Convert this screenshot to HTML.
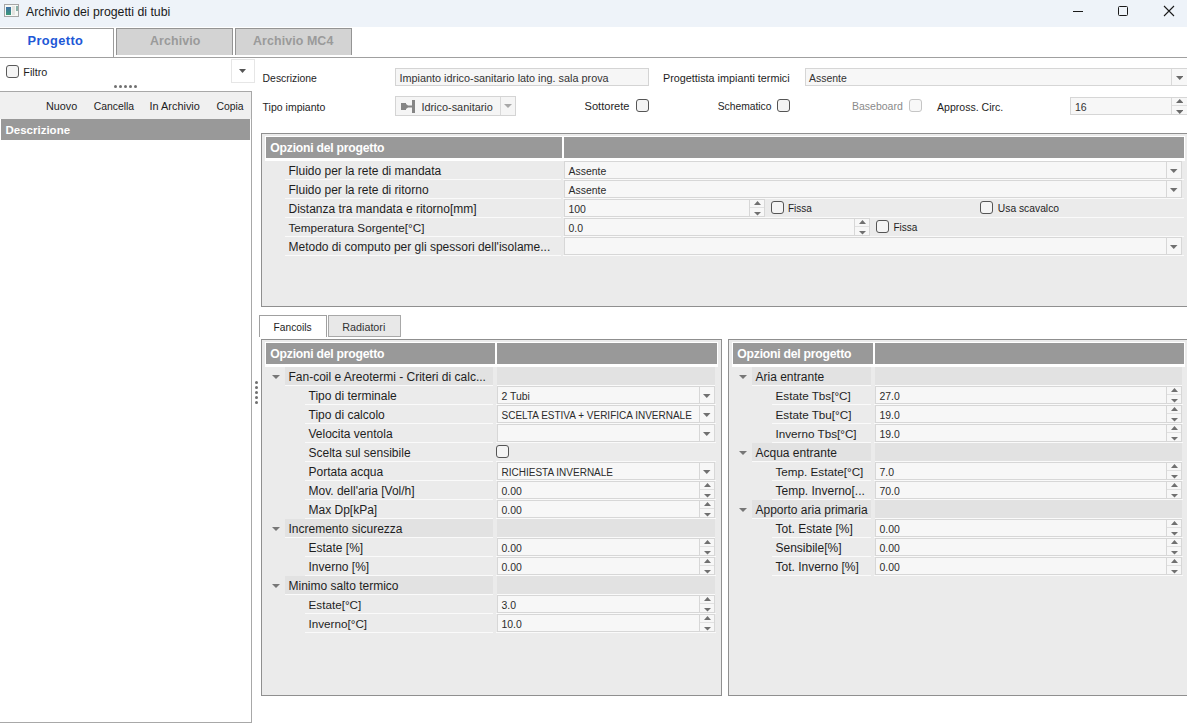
<!DOCTYPE html><html><head><meta charset="utf-8"><style>html,body{margin:0;padding:0}body{width:1187px;height:723px;overflow:hidden;position:relative;background:#fff;font-family:"Liberation Sans", sans-serif}.a{position:absolute;box-sizing:content-box}.t{white-space:nowrap;line-height:1}</style></head><body>
<div class="a" style="left:0px;top:0px;width:1187px;height:27px;background:#eef3f9"></div>
<div class="a" style="left:4px;top:4px;width:13px;height:11px;border:1px solid #a6a6a6;background:#f6f8f6"></div>
<div class="a" style="left:6px;top:7px;width:5px;height:8px;background:linear-gradient(180deg,#3f6fa6,#3d9a78)"></div>
<div class="a" style="left:12px;top:6px;width:3px;height:9px;background:#e4e4e0"></div>
<div class="a" style="left:16px;top:6px;width:2px;height:5px;background:#8ab0a8"></div>
<div class="a t" style="left:26px;top:6.00px;font-size:12.3px;color:#1a1a1a;font-weight:400;">Archivio dei progetti di tubi</div>
<div class="a" style="left:1073px;top:11px;width:10px;height:1px;background:#1a1a1a"></div>
<div class="a" style="left:1118px;top:6px;width:8px;height:8px;border:1px solid #1a1a1a;border-radius:1.5px"></div>
<svg class="a" style="left:1163px;top:5px" width="12" height="12"><path d="M1,1 L11,11 M11,1 L1,11" stroke="#1a1a1a" stroke-width="1.1"/></svg>
<div class="a" style="left:0px;top:57px;width:1187px;height:1px;background:#a0a0a0"></div>
<div class="a" style="left:0px;top:28px;width:113px;height:29px;background:#fff;border-top:1px solid #9c9c9c;border-right:1px solid #9c9c9c;box-sizing:border-box;width:114px;height:29px"></div>
<div class="a" style="left:116px;top:28px;width:117px;height:27px;background:#d3d3d3;border:1px solid #949494;border-bottom:none;box-sizing:border-box"></div>
<div class="a" style="left:235px;top:28px;width:117px;height:27px;background:#d3d3d3;border:1px solid #949494;border-bottom:none;box-sizing:border-box"></div>
<div class="a t" style="left:27.5px;top:35.00px;font-size:12.8px;color:#2157d6;font-weight:700;letter-spacing:0.4px;">Progetto</div>
<div class="a t" style="left:150px;top:35.00px;font-size:12.4px;color:#9a9a9a;font-weight:700;letter-spacing:0.1px;">Archivio</div>
<div class="a t" style="left:253px;top:35.00px;font-size:12.4px;color:#9a9a9a;font-weight:700;letter-spacing:0.1px;">Archivio MC4</div>
<div class="a" style="left:6px;top:65px;width:11px;height:11px;border:1px solid #5a5a5a;border-radius:3px;background:#f5f5f5"></div>
<div class="a t" style="left:23.3px;top:67.00px;font-size:10.8px;color:#1e1e1e;font-weight:400;">Filtro</div>
<div class="a" style="left:231px;top:59px;width:24px;height:24px;border:1px solid #e6e6e6;box-sizing:border-box;background:#fff"></div>
<svg class="a" style="left:239.00px;top:69px" width="7" height="4"><polygon points="0,0 7,0 3.5,4" fill="#555"/></svg>
<div class="a" style="left:114.3px;top:85px;width:3px;height:3px;background:#707070;border-radius:1.5px"></div>
<div class="a" style="left:119.1px;top:85px;width:3px;height:3px;background:#707070;border-radius:1.5px"></div>
<div class="a" style="left:123.89999999999999px;top:85px;width:3px;height:3px;background:#707070;border-radius:1.5px"></div>
<div class="a" style="left:128.7px;top:85px;width:3px;height:3px;background:#707070;border-radius:1.5px"></div>
<div class="a" style="left:133.5px;top:85px;width:3px;height:3px;background:#707070;border-radius:1.5px"></div>
<div class="a" style="left:0px;top:91px;width:252px;height:632px;border-top:1px solid #a8a8a8;border-right:1px solid #a8a8a8;border-bottom:1px solid #a8a8a8;box-sizing:border-box;background:#fff"></div>
<div class="a" style="left:0px;top:92px;width:251px;height:27px;background:#f0f0f0"></div>
<div class="a t" style="left:46px;top:101.00px;font-size:10.8px;color:#1e1e1e;font-weight:400;">Nuovo</div>
<div class="a t" style="left:93.7px;top:102.00px;font-size:10.4px;color:#1e1e1e;font-weight:400;">Cancella</div>
<div class="a t" style="left:149.6px;top:101.00px;font-size:10.9px;color:#1e1e1e;font-weight:400;">In Archivio</div>
<div class="a t" style="left:216.4px;top:102.00px;font-size:10.4px;color:#1e1e1e;font-weight:400;">Copia</div>
<div class="a" style="left:1px;top:119px;width:249px;height:21px;background:#999999"></div>
<div class="a t" style="left:5.5px;top:125.00px;font-size:11.5px;color:#fff;font-weight:700;">Descrizione</div>
<div class="a t" style="left:262.6px;top:74.00px;font-size:10.4px;color:#1e1e1e;font-weight:400;">Descrizione</div>
<div class="a" style="left:395px;top:68px;width:254px;height:18px;background:#f6f6f6;border:1px solid #d4d4d4;box-sizing:border-box"></div>
<div class="a t" style="left:399.5px;top:73.00px;font-size:10.85px;color:#333;font-weight:400;">Impianto idrico-sanitario lato ing. sala prova</div>
<div class="a t" style="left:663px;top:73.00px;font-size:10.8px;color:#1e1e1e;font-weight:400;">Progettista impianti termici</div>
<div class="a" style="left:805px;top:68px;width:400px;height:18px;background:#f7f7f7;border:1px solid #d6d6d6;box-sizing:border-box"></div>
<div class="a" style="left:1171px;top:69px;width:1px;height:16px;background:#d9d9d9"></div>
<div class="a t" style="left:809px;top:74.00px;font-size:10.45px;color:#333;font-weight:400;">Assente</div>
<svg class="a" style="left:1175.65px;top:76px" width="7.5" height="4"><polygon points="0,0 7.5,0 3.75,4" fill="#6a6a6a"/></svg>
<div class="a t" style="left:262.6px;top:102.00px;font-size:10.5px;color:#1e1e1e;font-weight:400;">Tipo impianto</div>
<div class="a" style="left:395px;top:96px;width:121px;height:20px;background:#f5f5f5;border:1px solid #d4d4d4;box-sizing:border-box"></div>
<div class="a" style="left:500px;top:97px;width:1px;height:18px;background:#d9d9d9"></div>
<svg class="a" style="left:504.00px;top:104px" width="8" height="4"><polygon points="0,0 8,0 4.0,4" fill="#a8a8a8"/></svg>
<svg class="a" style="left:400px;top:99px" width="16" height="15"><g fill="#858585"><rect x="1" y="4" width="5" height="7"/><polygon points="6,5 8,6.5 8,8.5 6,10"/><rect x="8" y="6.5" width="4" height="2"/><rect x="12" y="1" width="3" height="13"/></g></svg>
<div class="a t" style="left:421.4px;top:102.00px;font-size:10.9px;color:#333;font-weight:400;">Idrico-sanitario</div>
<div class="a t" style="left:584.5px;top:101.00px;font-size:11.1px;color:#1e1e1e;font-weight:400;">Sottorete</div>
<div class="a" style="left:636px;top:99px;width:11px;height:11px;border:1px solid #555;border-radius:3px;background:#f4f4f4"></div>
<div class="a t" style="left:717.7px;top:102.00px;font-size:10.3px;color:#1e1e1e;font-weight:400;">Schematico</div>
<div class="a" style="left:777px;top:99px;width:11px;height:11px;border:1px solid #555;border-radius:3px;background:#f4f4f4"></div>
<div class="a t" style="left:852px;top:101.00px;font-size:10.5px;color:#8a8a8a;font-weight:400;">Baseboard</div>
<div class="a" style="left:909px;top:99px;width:11px;height:11px;border:1px solid #c5c5c5;border-radius:3px;background:#f8f8f8"></div>
<div class="a t" style="left:937px;top:102.00px;font-size:10.55px;color:#1e1e1e;font-weight:400;">Appross. Circ.</div>
<div class="a" style="left:1070px;top:97px;width:140px;height:18px;background:#f7f7f7;border:1px solid #d6d6d6;box-sizing:border-box"></div>
<div class="a" style="left:1171px;top:98px;width:1px;height:16px;background:#d9d9d9"></div>
<div class="a" style="left:1172px;top:105px;width:15px;height:1px;background:#dedede"></div>
<svg class="a" style="left:1175.65px;top:99px" width="7.5" height="4"><polygon points="0,4 7.5,4 3.75,0" fill="#6a6a6a"/></svg>
<svg class="a" style="left:1175.65px;top:110px" width="7.5" height="4"><polygon points="0,0 7.5,0 3.75,4" fill="#6a6a6a"/></svg>
<div class="a t" style="left:1075px;top:102.00px;font-size:10.5px;color:#333;font-weight:400;">16</div>
<div class="a" style="left:261px;top:133px;width:939px;height:174px;border:1px solid #8f8f8f;box-sizing:border-box;background:#ebebeb"></div>
<div class="a" style="left:265px;top:136px;width:920px;height:25px;background:#fff"></div>
<div class="a" style="left:266px;top:137px;width:296px;height:21px;background:#999999"></div>
<div class="a" style="left:564px;top:137px;width:620px;height:21px;background:#999999"></div>
<div class="a t" style="left:270.3px;top:142.00px;font-size:12.2px;color:#fff;font-weight:700;letter-spacing:-0.23px;">Opzioni del progetto</div>
<div class="a" style="left:285px;top:179px;width:276px;height:1px;background:#fafafa"></div>
<div class="a t" style="left:288.5px;top:165.00px;font-size:12px;color:#1e1e1e;font-weight:400;">Fluido per la rete di mandata</div>
<div class="a" style="left:285px;top:198px;width:276px;height:1px;background:#fafafa"></div>
<div class="a t" style="left:288.5px;top:184.00px;font-size:12px;color:#1e1e1e;font-weight:400;">Fluido per la rete di ritorno</div>
<div class="a" style="left:285px;top:217px;width:276px;height:1px;background:#fafafa"></div>
<div class="a t" style="left:288.5px;top:203.00px;font-size:12px;color:#1e1e1e;font-weight:400;">Distanza tra mandata e ritorno[mm]</div>
<div class="a" style="left:285px;top:236px;width:276px;height:1px;background:#fafafa"></div>
<div class="a t" style="left:288.5px;top:222.00px;font-size:11.7px;color:#1e1e1e;font-weight:400;">Temperatura Sorgente[°C]</div>
<div class="a" style="left:285px;top:255px;width:276px;height:1px;background:#fafafa"></div>
<div class="a t" style="left:288.5px;top:241.00px;font-size:12px;color:#1e1e1e;font-weight:400;">Metodo di computo per gli spessori dell'isolame...</div>
<div class="a" style="left:563px;top:179px;width:621px;height:1px;background:#fafafa"></div>
<div class="a" style="left:563px;top:198px;width:621px;height:1px;background:#fafafa"></div>
<div class="a" style="left:563px;top:217px;width:621px;height:1px;background:#fafafa"></div>
<div class="a" style="left:563px;top:236px;width:621px;height:1px;background:#fafafa"></div>
<div class="a" style="left:563px;top:255px;width:621px;height:1px;background:#fafafa"></div>
<div class="a" style="left:564px;top:161px;width:618px;height:18px;background:#f7f7f7;border:1px solid #d7d7d7;box-sizing:border-box"></div>
<div class="a" style="left:1166px;top:162px;width:1px;height:16px;background:#d7d7d7"></div>
<svg class="a" style="left:1170.25px;top:169px" width="7.5" height="4"><polygon points="0,0 7.5,0 3.75,4" fill="#707070"/></svg>
<div class="a t" style="left:568.5px;top:167.00px;font-size:10.45px;color:#2b2b2b;font-weight:400;">Assente</div>
<div class="a" style="left:564px;top:180px;width:618px;height:18px;background:#f7f7f7;border:1px solid #d7d7d7;box-sizing:border-box"></div>
<div class="a" style="left:1166px;top:181px;width:1px;height:16px;background:#d7d7d7"></div>
<svg class="a" style="left:1170.25px;top:188px" width="7.5" height="4"><polygon points="0,0 7.5,0 3.75,4" fill="#707070"/></svg>
<div class="a t" style="left:568.5px;top:186.00px;font-size:10.45px;color:#2b2b2b;font-weight:400;">Assente</div>
<div class="a" style="left:564px;top:199px;width:201px;height:18px;background:#f7f7f7;border:1px solid #d7d7d7;box-sizing:border-box"></div>
<div class="a" style="left:749px;top:200px;width:1px;height:16px;background:#d7d7d7"></div>
<div class="a" style="left:750px;top:207px;width:14px;height:1px;background:#e0e0e0"></div>
<svg class="a" style="left:753.50px;top:201px" width="7" height="4"><polygon points="0,4 7,4 3.5,0" fill="#707070"/></svg>
<svg class="a" style="left:753.50px;top:212px" width="7" height="3.6"><polygon points="0,0 7,0 3.5,3.6" fill="#707070"/></svg>
<div class="a t" style="left:568.5px;top:205.00px;font-size:10.45px;color:#2b2b2b;font-weight:400;">100</div>
<div class="a" style="left:771px;top:201px;width:11px;height:11px;border:1px solid #555;border-radius:3px;background:#f4f4f4"></div>
<div class="a t" style="left:788px;top:204.00px;font-size:10.0px;color:#1e1e1e;font-weight:400;">Fissa</div>
<div class="a" style="left:980px;top:201px;width:11px;height:11px;border:1px solid #555;border-radius:3px;background:#f4f4f4"></div>
<div class="a t" style="left:997.8px;top:204.00px;font-size:10.3px;color:#1e1e1e;font-weight:400;">Usa scavalco</div>
<div class="a" style="left:564px;top:218px;width:306px;height:18px;background:#f7f7f7;border:1px solid #d7d7d7;box-sizing:border-box"></div>
<div class="a" style="left:854px;top:219px;width:1px;height:16px;background:#d7d7d7"></div>
<div class="a" style="left:855px;top:226px;width:14px;height:1px;background:#e0e0e0"></div>
<svg class="a" style="left:858.50px;top:220px" width="7" height="4"><polygon points="0,4 7,4 3.5,0" fill="#707070"/></svg>
<svg class="a" style="left:858.50px;top:231px" width="7" height="3.6"><polygon points="0,0 7,0 3.5,3.6" fill="#707070"/></svg>
<div class="a t" style="left:568.5px;top:224.00px;font-size:10.45px;color:#2b2b2b;font-weight:400;">0.0</div>
<div class="a" style="left:876px;top:220px;width:11px;height:11px;border:1px solid #555;border-radius:3px;background:#f4f4f4"></div>
<div class="a t" style="left:893.5px;top:223.00px;font-size:10.0px;color:#1e1e1e;font-weight:400;">Fissa</div>
<div class="a" style="left:564px;top:237px;width:618px;height:18px;background:#f7f7f7;border:1px solid #d7d7d7;box-sizing:border-box"></div>
<div class="a" style="left:1166px;top:238px;width:1px;height:16px;background:#d7d7d7"></div>
<svg class="a" style="left:1170.25px;top:245px" width="7.5" height="4"><polygon points="0,0 7.5,0 3.75,4" fill="#707070"/></svg>
<div class="a" style="left:259px;top:315px;width:68px;height:22px;background:#fff;border:1px solid #a0a0a0;border-bottom:none;box-sizing:border-box"></div>
<div class="a" style="left:328px;top:315px;width:73px;height:22px;background:#e8e8e8;border:1px solid #a8a8a8;box-sizing:border-box"></div>
<div class="a t" style="left:273.6px;top:323.00px;font-size:10.2px;color:#1e1e1e;font-weight:400;">Fancoils</div>
<div class="a t" style="left:342.3px;top:322.00px;font-size:10.75px;color:#333;font-weight:400;">Radiatori</div>
<div class="a" style="left:261px;top:339px;width:461px;height:357px;border:1px solid #8f8f8f;box-sizing:border-box;background:#ebebeb"></div>
<div class="a" style="left:265px;top:342px;width:453px;height:25px;background:#fff"></div>
<div class="a" style="left:266px;top:343px;width:229px;height:21px;background:#999999"></div>
<div class="a" style="left:497px;top:343px;width:220px;height:21px;background:#999999"></div>
<div class="a t" style="left:270.3px;top:348.00px;font-size:12.2px;color:#fff;font-weight:700;letter-spacing:-0.23px;">Opzioni del progetto</div>
<div class="a" style="left:285px;top:367px;width:208px;height:18px;background:#e2e2e2"></div>
<div class="a" style="left:285px;top:385px;width:208px;height:1px;background:#fafafa"></div>
<div class="a t" style="left:288.5px;top:371.00px;font-size:12px;color:#1e1e1e;font-weight:400;">Fan-coil e Areotermi - Criteri di calc...</div>
<div class="a" style="left:497px;top:367px;width:218px;height:18px;background:#e2e2e2"></div>
<div class="a" style="left:497px;top:385px;width:218px;height:1px;background:#fafafa"></div>
<svg class="a" style="left:271.50px;top:375px" width="8" height="4"><polygon points="0,0 8,0 4.0,4" fill="#777"/></svg>
<div class="a" style="left:305px;top:404px;width:188px;height:1px;background:#fafafa"></div>
<div class="a t" style="left:308.5px;top:390.00px;font-size:12px;color:#1e1e1e;font-weight:400;">Tipo di terminale</div>
<div class="a" style="left:496px;top:404px;width:220px;height:1px;background:#fafafa"></div>
<div class="a" style="left:497px;top:386px;width:218px;height:18px;background:#f7f7f7;border:1px solid #d7d7d7;box-sizing:border-box"></div>
<div class="a" style="left:699px;top:387px;width:1px;height:16px;background:#d7d7d7"></div>
<svg class="a" style="left:703.25px;top:394px" width="7.5" height="4"><polygon points="0,0 7.5,0 3.75,4" fill="#707070"/></svg>
<div class="a t" style="left:501.5px;top:392.00px;font-size:10.45px;color:#2b2b2b;font-weight:400;">2 Tubi</div>
<div class="a" style="left:305px;top:423px;width:188px;height:1px;background:#fafafa"></div>
<div class="a t" style="left:308.5px;top:409.00px;font-size:12px;color:#1e1e1e;font-weight:400;">Tipo di calcolo</div>
<div class="a" style="left:496px;top:423px;width:220px;height:1px;background:#fafafa"></div>
<div class="a" style="left:497px;top:405px;width:218px;height:18px;background:#f7f7f7;border:1px solid #d7d7d7;box-sizing:border-box"></div>
<div class="a" style="left:699px;top:406px;width:1px;height:16px;background:#d7d7d7"></div>
<svg class="a" style="left:703.25px;top:413px" width="7.5" height="4"><polygon points="0,0 7.5,0 3.75,4" fill="#707070"/></svg>
<div class="a t" style="left:501.5px;top:411.00px;font-size:10.0px;color:#2b2b2b;font-weight:400;">SCELTA ESTIVA + VERIFICA INVERNALE</div>
<div class="a" style="left:305px;top:442px;width:188px;height:1px;background:#fafafa"></div>
<div class="a t" style="left:308.5px;top:428.00px;font-size:12px;color:#1e1e1e;font-weight:400;">Velocita ventola</div>
<div class="a" style="left:496px;top:442px;width:220px;height:1px;background:#fafafa"></div>
<div class="a" style="left:497px;top:424px;width:218px;height:18px;background:#f7f7f7;border:1px solid #d7d7d7;box-sizing:border-box"></div>
<div class="a" style="left:699px;top:425px;width:1px;height:16px;background:#d7d7d7"></div>
<svg class="a" style="left:703.25px;top:432px" width="7.5" height="4"><polygon points="0,0 7.5,0 3.75,4" fill="#707070"/></svg>
<div class="a" style="left:305px;top:461px;width:188px;height:1px;background:#fafafa"></div>
<div class="a t" style="left:308.5px;top:447.00px;font-size:12px;color:#1e1e1e;font-weight:400;">Scelta sul sensibile</div>
<div class="a" style="left:496px;top:461px;width:220px;height:1px;background:#fafafa"></div>
<div class="a" style="left:496px;top:445px;width:11px;height:11px;border:1px solid #555;border-radius:3px;background:#f4f4f4"></div>
<div class="a" style="left:305px;top:480px;width:188px;height:1px;background:#fafafa"></div>
<div class="a t" style="left:308.5px;top:466.00px;font-size:12px;color:#1e1e1e;font-weight:400;">Portata acqua</div>
<div class="a" style="left:496px;top:480px;width:220px;height:1px;background:#fafafa"></div>
<div class="a" style="left:497px;top:462px;width:218px;height:18px;background:#f7f7f7;border:1px solid #d7d7d7;box-sizing:border-box"></div>
<div class="a" style="left:699px;top:463px;width:1px;height:16px;background:#d7d7d7"></div>
<svg class="a" style="left:703.25px;top:470px" width="7.5" height="4"><polygon points="0,0 7.5,0 3.75,4" fill="#707070"/></svg>
<div class="a t" style="left:501.5px;top:468.00px;font-size:10.0px;color:#2b2b2b;font-weight:400;">RICHIESTA INVERNALE</div>
<div class="a" style="left:305px;top:499px;width:188px;height:1px;background:#fafafa"></div>
<div class="a t" style="left:308.5px;top:485.00px;font-size:12px;color:#1e1e1e;font-weight:400;">Mov. dell'aria [Vol/h]</div>
<div class="a" style="left:496px;top:499px;width:220px;height:1px;background:#fafafa"></div>
<div class="a" style="left:497px;top:481px;width:218px;height:18px;background:#f7f7f7;border:1px solid #d7d7d7;box-sizing:border-box"></div>
<div class="a" style="left:699px;top:482px;width:1px;height:16px;background:#d7d7d7"></div>
<div class="a" style="left:700px;top:489px;width:14px;height:1px;background:#e0e0e0"></div>
<svg class="a" style="left:703.50px;top:483px" width="7" height="4"><polygon points="0,4 7,4 3.5,0" fill="#707070"/></svg>
<svg class="a" style="left:703.50px;top:494px" width="7" height="3.6"><polygon points="0,0 7,0 3.5,3.6" fill="#707070"/></svg>
<div class="a t" style="left:501.5px;top:487.00px;font-size:10.45px;color:#2b2b2b;font-weight:400;">0.00</div>
<div class="a" style="left:305px;top:518px;width:188px;height:1px;background:#fafafa"></div>
<div class="a t" style="left:308.5px;top:504.00px;font-size:12px;color:#1e1e1e;font-weight:400;">Max Dp[kPa]</div>
<div class="a" style="left:496px;top:518px;width:220px;height:1px;background:#fafafa"></div>
<div class="a" style="left:497px;top:500px;width:218px;height:18px;background:#f7f7f7;border:1px solid #d7d7d7;box-sizing:border-box"></div>
<div class="a" style="left:699px;top:501px;width:1px;height:16px;background:#d7d7d7"></div>
<div class="a" style="left:700px;top:508px;width:14px;height:1px;background:#e0e0e0"></div>
<svg class="a" style="left:703.50px;top:502px" width="7" height="4"><polygon points="0,4 7,4 3.5,0" fill="#707070"/></svg>
<svg class="a" style="left:703.50px;top:513px" width="7" height="3.6"><polygon points="0,0 7,0 3.5,3.6" fill="#707070"/></svg>
<div class="a t" style="left:501.5px;top:506.00px;font-size:10.45px;color:#2b2b2b;font-weight:400;">0.00</div>
<div class="a" style="left:285px;top:519px;width:208px;height:18px;background:#e2e2e2"></div>
<div class="a" style="left:285px;top:537px;width:208px;height:1px;background:#fafafa"></div>
<div class="a t" style="left:288.5px;top:523.00px;font-size:12px;color:#1e1e1e;font-weight:400;">Incremento sicurezza</div>
<div class="a" style="left:497px;top:519px;width:218px;height:18px;background:#e2e2e2"></div>
<div class="a" style="left:497px;top:537px;width:218px;height:1px;background:#fafafa"></div>
<svg class="a" style="left:271.50px;top:527px" width="8" height="4"><polygon points="0,0 8,0 4.0,4" fill="#777"/></svg>
<div class="a" style="left:305px;top:556px;width:188px;height:1px;background:#fafafa"></div>
<div class="a t" style="left:308.5px;top:542.00px;font-size:12px;color:#1e1e1e;font-weight:400;">Estate [%]</div>
<div class="a" style="left:496px;top:556px;width:220px;height:1px;background:#fafafa"></div>
<div class="a" style="left:497px;top:538px;width:218px;height:18px;background:#f7f7f7;border:1px solid #d7d7d7;box-sizing:border-box"></div>
<div class="a" style="left:699px;top:539px;width:1px;height:16px;background:#d7d7d7"></div>
<div class="a" style="left:700px;top:546px;width:14px;height:1px;background:#e0e0e0"></div>
<svg class="a" style="left:703.50px;top:540px" width="7" height="4"><polygon points="0,4 7,4 3.5,0" fill="#707070"/></svg>
<svg class="a" style="left:703.50px;top:551px" width="7" height="3.6"><polygon points="0,0 7,0 3.5,3.6" fill="#707070"/></svg>
<div class="a t" style="left:501.5px;top:544.00px;font-size:10.45px;color:#2b2b2b;font-weight:400;">0.00</div>
<div class="a" style="left:305px;top:575px;width:188px;height:1px;background:#fafafa"></div>
<div class="a t" style="left:308.5px;top:561.00px;font-size:12px;color:#1e1e1e;font-weight:400;">Inverno [%]</div>
<div class="a" style="left:496px;top:575px;width:220px;height:1px;background:#fafafa"></div>
<div class="a" style="left:497px;top:557px;width:218px;height:18px;background:#f7f7f7;border:1px solid #d7d7d7;box-sizing:border-box"></div>
<div class="a" style="left:699px;top:558px;width:1px;height:16px;background:#d7d7d7"></div>
<div class="a" style="left:700px;top:565px;width:14px;height:1px;background:#e0e0e0"></div>
<svg class="a" style="left:703.50px;top:559px" width="7" height="4"><polygon points="0,4 7,4 3.5,0" fill="#707070"/></svg>
<svg class="a" style="left:703.50px;top:570px" width="7" height="3.6"><polygon points="0,0 7,0 3.5,3.6" fill="#707070"/></svg>
<div class="a t" style="left:501.5px;top:563.00px;font-size:10.45px;color:#2b2b2b;font-weight:400;">0.00</div>
<div class="a" style="left:285px;top:576px;width:208px;height:18px;background:#e2e2e2"></div>
<div class="a" style="left:285px;top:594px;width:208px;height:1px;background:#fafafa"></div>
<div class="a t" style="left:288.5px;top:580.00px;font-size:12px;color:#1e1e1e;font-weight:400;">Minimo salto termico</div>
<div class="a" style="left:497px;top:576px;width:218px;height:18px;background:#e2e2e2"></div>
<div class="a" style="left:497px;top:594px;width:218px;height:1px;background:#fafafa"></div>
<svg class="a" style="left:271.50px;top:584px" width="8" height="4"><polygon points="0,0 8,0 4.0,4" fill="#777"/></svg>
<div class="a" style="left:305px;top:613px;width:188px;height:1px;background:#fafafa"></div>
<div class="a t" style="left:308.5px;top:599.00px;font-size:11.7px;color:#1e1e1e;font-weight:400;">Estate[°C]</div>
<div class="a" style="left:496px;top:613px;width:220px;height:1px;background:#fafafa"></div>
<div class="a" style="left:497px;top:595px;width:218px;height:18px;background:#f7f7f7;border:1px solid #d7d7d7;box-sizing:border-box"></div>
<div class="a" style="left:699px;top:596px;width:1px;height:16px;background:#d7d7d7"></div>
<div class="a" style="left:700px;top:603px;width:14px;height:1px;background:#e0e0e0"></div>
<svg class="a" style="left:703.50px;top:597px" width="7" height="4"><polygon points="0,4 7,4 3.5,0" fill="#707070"/></svg>
<svg class="a" style="left:703.50px;top:608px" width="7" height="3.6"><polygon points="0,0 7,0 3.5,3.6" fill="#707070"/></svg>
<div class="a t" style="left:501.5px;top:601.00px;font-size:10.45px;color:#2b2b2b;font-weight:400;">3.0</div>
<div class="a" style="left:305px;top:632px;width:188px;height:1px;background:#fafafa"></div>
<div class="a t" style="left:308.5px;top:618.00px;font-size:11.7px;color:#1e1e1e;font-weight:400;">Inverno[°C]</div>
<div class="a" style="left:496px;top:632px;width:220px;height:1px;background:#fafafa"></div>
<div class="a" style="left:497px;top:614px;width:218px;height:18px;background:#f7f7f7;border:1px solid #d7d7d7;box-sizing:border-box"></div>
<div class="a" style="left:699px;top:615px;width:1px;height:16px;background:#d7d7d7"></div>
<div class="a" style="left:700px;top:622px;width:14px;height:1px;background:#e0e0e0"></div>
<svg class="a" style="left:703.50px;top:616px" width="7" height="4"><polygon points="0,4 7,4 3.5,0" fill="#707070"/></svg>
<svg class="a" style="left:703.50px;top:627px" width="7" height="3.6"><polygon points="0,0 7,0 3.5,3.6" fill="#707070"/></svg>
<div class="a t" style="left:501.5px;top:620.00px;font-size:10.45px;color:#2b2b2b;font-weight:400;">10.0</div>
<div class="a" style="left:728px;top:339px;width:472px;height:357px;border:1px solid #8f8f8f;box-sizing:border-box;background:#ebebeb"></div>
<div class="a" style="left:732px;top:342px;width:453px;height:25px;background:#fff"></div>
<div class="a" style="left:733px;top:343px;width:140px;height:21px;background:#999999"></div>
<div class="a" style="left:875px;top:343px;width:309px;height:21px;background:#999999"></div>
<div class="a t" style="left:737.3px;top:348.00px;font-size:12.2px;color:#fff;font-weight:700;letter-spacing:-0.23px;">Opzioni del progetto</div>
<div class="a" style="left:752px;top:367px;width:119px;height:18px;background:#e2e2e2"></div>
<div class="a" style="left:752px;top:385px;width:119px;height:1px;background:#fafafa"></div>
<div class="a t" style="left:755.5px;top:371.00px;font-size:12px;color:#1e1e1e;font-weight:400;">Aria entrante</div>
<div class="a" style="left:875px;top:367px;width:307px;height:18px;background:#e2e2e2"></div>
<div class="a" style="left:875px;top:385px;width:307px;height:1px;background:#fafafa"></div>
<svg class="a" style="left:738.50px;top:375px" width="8" height="4"><polygon points="0,0 8,0 4.0,4" fill="#777"/></svg>
<div class="a" style="left:772px;top:404px;width:99px;height:1px;background:#fafafa"></div>
<div class="a t" style="left:775.5px;top:390.00px;font-size:11.7px;color:#1e1e1e;font-weight:400;">Estate Tbs[°C]</div>
<div class="a" style="left:874px;top:404px;width:309px;height:1px;background:#fafafa"></div>
<div class="a" style="left:875px;top:386px;width:307px;height:18px;background:#f7f7f7;border:1px solid #d7d7d7;box-sizing:border-box"></div>
<div class="a" style="left:1166px;top:387px;width:1px;height:16px;background:#d7d7d7"></div>
<div class="a" style="left:1167px;top:394px;width:14px;height:1px;background:#e0e0e0"></div>
<svg class="a" style="left:1170.50px;top:388px" width="7" height="4"><polygon points="0,4 7,4 3.5,0" fill="#707070"/></svg>
<svg class="a" style="left:1170.50px;top:399px" width="7" height="3.6"><polygon points="0,0 7,0 3.5,3.6" fill="#707070"/></svg>
<div class="a t" style="left:879.5px;top:392.00px;font-size:10.45px;color:#2b2b2b;font-weight:400;">27.0</div>
<div class="a" style="left:772px;top:423px;width:99px;height:1px;background:#fafafa"></div>
<div class="a t" style="left:775.5px;top:409.00px;font-size:11.7px;color:#1e1e1e;font-weight:400;">Estate Tbu[°C]</div>
<div class="a" style="left:874px;top:423px;width:309px;height:1px;background:#fafafa"></div>
<div class="a" style="left:875px;top:405px;width:307px;height:18px;background:#f7f7f7;border:1px solid #d7d7d7;box-sizing:border-box"></div>
<div class="a" style="left:1166px;top:406px;width:1px;height:16px;background:#d7d7d7"></div>
<div class="a" style="left:1167px;top:413px;width:14px;height:1px;background:#e0e0e0"></div>
<svg class="a" style="left:1170.50px;top:407px" width="7" height="4"><polygon points="0,4 7,4 3.5,0" fill="#707070"/></svg>
<svg class="a" style="left:1170.50px;top:418px" width="7" height="3.6"><polygon points="0,0 7,0 3.5,3.6" fill="#707070"/></svg>
<div class="a t" style="left:879.5px;top:411.00px;font-size:10.45px;color:#2b2b2b;font-weight:400;">19.0</div>
<div class="a" style="left:772px;top:442px;width:99px;height:1px;background:#fafafa"></div>
<div class="a t" style="left:775.5px;top:428.00px;font-size:11.7px;color:#1e1e1e;font-weight:400;">Inverno Tbs[°C]</div>
<div class="a" style="left:874px;top:442px;width:309px;height:1px;background:#fafafa"></div>
<div class="a" style="left:875px;top:424px;width:307px;height:18px;background:#f7f7f7;border:1px solid #d7d7d7;box-sizing:border-box"></div>
<div class="a" style="left:1166px;top:425px;width:1px;height:16px;background:#d7d7d7"></div>
<div class="a" style="left:1167px;top:432px;width:14px;height:1px;background:#e0e0e0"></div>
<svg class="a" style="left:1170.50px;top:426px" width="7" height="4"><polygon points="0,4 7,4 3.5,0" fill="#707070"/></svg>
<svg class="a" style="left:1170.50px;top:437px" width="7" height="3.6"><polygon points="0,0 7,0 3.5,3.6" fill="#707070"/></svg>
<div class="a t" style="left:879.5px;top:430.00px;font-size:10.45px;color:#2b2b2b;font-weight:400;">19.0</div>
<div class="a" style="left:752px;top:443px;width:119px;height:18px;background:#e2e2e2"></div>
<div class="a" style="left:752px;top:461px;width:119px;height:1px;background:#fafafa"></div>
<div class="a t" style="left:755.5px;top:447.00px;font-size:12px;color:#1e1e1e;font-weight:400;">Acqua entrante</div>
<div class="a" style="left:875px;top:443px;width:307px;height:18px;background:#e2e2e2"></div>
<div class="a" style="left:875px;top:461px;width:307px;height:1px;background:#fafafa"></div>
<svg class="a" style="left:738.50px;top:451px" width="8" height="4"><polygon points="0,0 8,0 4.0,4" fill="#777"/></svg>
<div class="a" style="left:772px;top:480px;width:99px;height:1px;background:#fafafa"></div>
<div class="a t" style="left:775.5px;top:466.00px;font-size:11.7px;color:#1e1e1e;font-weight:400;">Temp. Estate[°C]</div>
<div class="a" style="left:874px;top:480px;width:309px;height:1px;background:#fafafa"></div>
<div class="a" style="left:875px;top:462px;width:307px;height:18px;background:#f7f7f7;border:1px solid #d7d7d7;box-sizing:border-box"></div>
<div class="a" style="left:1166px;top:463px;width:1px;height:16px;background:#d7d7d7"></div>
<div class="a" style="left:1167px;top:470px;width:14px;height:1px;background:#e0e0e0"></div>
<svg class="a" style="left:1170.50px;top:464px" width="7" height="4"><polygon points="0,4 7,4 3.5,0" fill="#707070"/></svg>
<svg class="a" style="left:1170.50px;top:475px" width="7" height="3.6"><polygon points="0,0 7,0 3.5,3.6" fill="#707070"/></svg>
<div class="a t" style="left:879.5px;top:468.00px;font-size:10.45px;color:#2b2b2b;font-weight:400;">7.0</div>
<div class="a" style="left:772px;top:499px;width:99px;height:1px;background:#fafafa"></div>
<div class="a t" style="left:775.5px;top:485.00px;font-size:12px;color:#1e1e1e;font-weight:400;">Temp. Inverno[...</div>
<div class="a" style="left:874px;top:499px;width:309px;height:1px;background:#fafafa"></div>
<div class="a" style="left:875px;top:481px;width:307px;height:18px;background:#f7f7f7;border:1px solid #d7d7d7;box-sizing:border-box"></div>
<div class="a" style="left:1166px;top:482px;width:1px;height:16px;background:#d7d7d7"></div>
<div class="a" style="left:1167px;top:489px;width:14px;height:1px;background:#e0e0e0"></div>
<svg class="a" style="left:1170.50px;top:483px" width="7" height="4"><polygon points="0,4 7,4 3.5,0" fill="#707070"/></svg>
<svg class="a" style="left:1170.50px;top:494px" width="7" height="3.6"><polygon points="0,0 7,0 3.5,3.6" fill="#707070"/></svg>
<div class="a t" style="left:879.5px;top:487.00px;font-size:10.45px;color:#2b2b2b;font-weight:400;">70.0</div>
<div class="a" style="left:752px;top:500px;width:119px;height:18px;background:#e2e2e2"></div>
<div class="a" style="left:752px;top:518px;width:119px;height:1px;background:#fafafa"></div>
<div class="a t" style="left:755.5px;top:504.00px;font-size:12px;color:#1e1e1e;font-weight:400;">Apporto aria primaria</div>
<div class="a" style="left:875px;top:500px;width:307px;height:18px;background:#e2e2e2"></div>
<div class="a" style="left:875px;top:518px;width:307px;height:1px;background:#fafafa"></div>
<svg class="a" style="left:738.50px;top:508px" width="8" height="4"><polygon points="0,0 8,0 4.0,4" fill="#777"/></svg>
<div class="a" style="left:772px;top:537px;width:99px;height:1px;background:#fafafa"></div>
<div class="a t" style="left:775.5px;top:523.00px;font-size:12px;color:#1e1e1e;font-weight:400;">Tot. Estate [%]</div>
<div class="a" style="left:874px;top:537px;width:309px;height:1px;background:#fafafa"></div>
<div class="a" style="left:875px;top:519px;width:307px;height:18px;background:#f7f7f7;border:1px solid #d7d7d7;box-sizing:border-box"></div>
<div class="a" style="left:1166px;top:520px;width:1px;height:16px;background:#d7d7d7"></div>
<div class="a" style="left:1167px;top:527px;width:14px;height:1px;background:#e0e0e0"></div>
<svg class="a" style="left:1170.50px;top:521px" width="7" height="4"><polygon points="0,4 7,4 3.5,0" fill="#707070"/></svg>
<svg class="a" style="left:1170.50px;top:532px" width="7" height="3.6"><polygon points="0,0 7,0 3.5,3.6" fill="#707070"/></svg>
<div class="a t" style="left:879.5px;top:525.00px;font-size:10.45px;color:#2b2b2b;font-weight:400;">0.00</div>
<div class="a" style="left:772px;top:556px;width:99px;height:1px;background:#fafafa"></div>
<div class="a t" style="left:775.5px;top:542.00px;font-size:12px;color:#1e1e1e;font-weight:400;">Sensibile[%]</div>
<div class="a" style="left:874px;top:556px;width:309px;height:1px;background:#fafafa"></div>
<div class="a" style="left:875px;top:538px;width:307px;height:18px;background:#f7f7f7;border:1px solid #d7d7d7;box-sizing:border-box"></div>
<div class="a" style="left:1166px;top:539px;width:1px;height:16px;background:#d7d7d7"></div>
<div class="a" style="left:1167px;top:546px;width:14px;height:1px;background:#e0e0e0"></div>
<svg class="a" style="left:1170.50px;top:540px" width="7" height="4"><polygon points="0,4 7,4 3.5,0" fill="#707070"/></svg>
<svg class="a" style="left:1170.50px;top:551px" width="7" height="3.6"><polygon points="0,0 7,0 3.5,3.6" fill="#707070"/></svg>
<div class="a t" style="left:879.5px;top:544.00px;font-size:10.45px;color:#2b2b2b;font-weight:400;">0.00</div>
<div class="a" style="left:772px;top:575px;width:99px;height:1px;background:#fafafa"></div>
<div class="a t" style="left:775.5px;top:561.00px;font-size:12px;color:#1e1e1e;font-weight:400;">Tot. Inverno [%]</div>
<div class="a" style="left:874px;top:575px;width:309px;height:1px;background:#fafafa"></div>
<div class="a" style="left:875px;top:557px;width:307px;height:18px;background:#f7f7f7;border:1px solid #d7d7d7;box-sizing:border-box"></div>
<div class="a" style="left:1166px;top:558px;width:1px;height:16px;background:#d7d7d7"></div>
<div class="a" style="left:1167px;top:565px;width:14px;height:1px;background:#e0e0e0"></div>
<svg class="a" style="left:1170.50px;top:559px" width="7" height="4"><polygon points="0,4 7,4 3.5,0" fill="#707070"/></svg>
<svg class="a" style="left:1170.50px;top:570px" width="7" height="3.6"><polygon points="0,0 7,0 3.5,3.6" fill="#707070"/></svg>
<div class="a t" style="left:879.5px;top:563.00px;font-size:10.45px;color:#2b2b2b;font-weight:400;">0.00</div>
<div class="a" style="left:255px;top:381.3px;width:3px;height:3px;background:#707070;border-radius:1.5px"></div>
<div class="a" style="left:255px;top:386.1px;width:3px;height:3px;background:#707070;border-radius:1.5px"></div>
<div class="a" style="left:255px;top:390.90000000000003px;width:3px;height:3px;background:#707070;border-radius:1.5px"></div>
<div class="a" style="left:255px;top:395.7px;width:3px;height:3px;background:#707070;border-radius:1.5px"></div>
<div class="a" style="left:255px;top:400.5px;width:3px;height:3px;background:#707070;border-radius:1.5px"></div>
</body></html>
